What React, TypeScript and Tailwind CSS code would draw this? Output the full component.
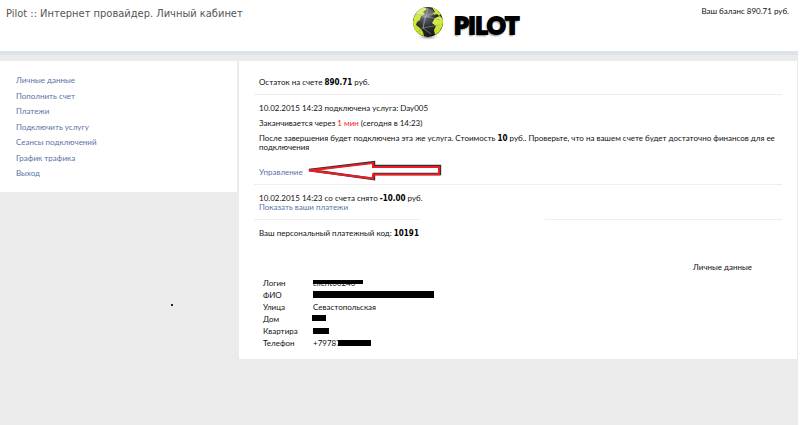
import React from "react";

const menu = [
  "Личные данные",
  "Пополнить счет",
  "Платежи",
  "Подключить услугу",
  "Сеансы подключений",
  "График трафика",
  "Выход",
];

const Bold = ({ children }: { children: React.ReactNode }) => (
  <b className="font-['DejaVu_Sans_Condensed','DejaVu_Sans',sans-serif] leading-[6px] text-black">{children}</b>
);

const Globe = () => (
  <svg width="34" height="36" viewBox="0 0 34 36" aria-hidden="true">
    <defs>
      <radialGradient id="sea" cx="0.4" cy="0.3" r="0.75">
        <stop offset="0" stopColor="#6b7075" />
        <stop offset="0.5" stopColor="#2b2e30" />
        <stop offset="1" stopColor="#101213" />
      </radialGradient>
      <linearGradient id="land" x1="0" y1="0" x2="0.3" y2="1">
        <stop offset="0" stopColor="#e0f05a" />
        <stop offset="1" stopColor="#bfe018" />
      </linearGradient>
      <radialGradient id="shade">
        <stop offset="0" stopColor="#777" />
        <stop offset="1" stopColor="#fff" stopOpacity="0" />
      </radialGradient>
      <clipPath id="disc">
        <circle cx="15" cy="17" r="15" />
      </clipPath>
    </defs>
    <ellipse cx="15" cy="32" rx="13" ry="3.5" fill="url(#shade)" />
    <circle cx="15" cy="17" r="15" fill="url(#sea)" />
    <g clipPath="url(#disc)">
      <g fill="url(#land)">
        <path d="M1 12L5 5L11 2L14 4L10 7L12 9L8 11L7 15L4 17L3 20L7 23L10 27L11 31L5 29L-1 22Z" />
        <path d="M19 2L24 4L28 9L26 11L24 9L21 10L20 8L22 7Z" />
        <path d="M22 13L27 11L31 15L29 22L26 27L22 30L21 25L23 21L19 18Z" />
      </g>
      <path
        d="M2 9L12 11L22 8M12 11L10 23L18 29M10 23L26 20M12 11L27 15M5 27L10 23L15 3"
        fill="none"
        stroke="#9ba1a0"
        strokeWidth="0.6"
      />
      <ellipse cx="12" cy="8" rx="9" ry="5" fill="#fff" opacity="0.22" />
    </g>
  </svg>
);

const Arrow = () => (
  <svg
    className="absolute left-[47px] -top-[8px]"
    width="136"
    height="22"
    viewBox="0 0 136 22"
    aria-hidden="true"
  >
    <path d="M3 10L68 2V6H134V14H68V19Z" fill="none" stroke="#333" strokeWidth="2.4" />
    <path d="M3 10.500L67 3V7H133V14.500H67V18.500Z" fill="none" stroke="#ed1c24" strokeWidth="2" />
  </svg>
);

const rows = [
  { label: "Логин", value: "client00240", bar: "left-0 top-px w-[50px] h-[4px]" },
  { label: "ФИО", value: "", bar: "left-0 top-0 w-[121px] h-[7px]" },
  { label: "Улица", value: "Севастопольская", bar: "" },
  { label: "Дом", value: "", bar: "-left-px top-0 w-[14px] h-[6px]" },
  { label: "Квартира", value: "", bar: "left-0 top-px w-[16px] h-[6px]" },
  { label: "Телефон", value: "+79787", bar: "left-[25px] top-px w-[33px] h-[6px]" },
];

const App = () => {
  return (
    <div className="min-h-screen bg-white pr-[2px] font-[Lato,sans-serif] text-[8px] leading-[9px] text-[#111]">
      <div className="min-h-screen bg-[#ebebeb]">

        <header className="flex h-[55px] border-b-4 border-[#dce2ec] bg-white pl-[6px] pr-[9px]">
          <h1 className="w-[52%] pt-[6px] font-['DejaVu_Sans_Condensed','DejaVu_Sans',sans-serif] text-[11px] leading-[16px] text-[#555]">
            Pilot :: Интернет провайдер. Личный кабинет
          </h1>
          <div className="flex gap-[7px] pt-[5px]">
            <Globe />
            <span className="pt-[6px] text-[23px] leading-[28px] font-black text-black [-webkit-text-stroke:2px_black] [text-shadow:-1px_2px_2px_#888]">
              PILOT
            </span>
          </div>
          <p className="flex-1 pt-[7px] text-right">Ваш баланс 890.71 руб.</p>
        </header>

        <div className="flex items-start gap-[2px] pt-[6px] pr-px">

          <nav className="w-[237px] shrink-0 bg-white px-[16px] pt-[15px] pb-[14px]">
            <ul className="flex h-[102px] flex-col justify-between">
              {menu.map((item) => (
                <li key={item}>
                  <a href="#" className="block text-[#5a73a8]">{item}</a>
                </li>
              ))}
            </ul>
          </nav>

          <main className="flex-1 bg-white pr-[15px] pb-[10px] pl-[15px]">
            <p className="border-b border-[#eee] px-[5px] pt-[17px] pb-[7px]">
              Остаток на счете <Bold>890.71</Bold> руб.
            </p>

            <section className="flex flex-col gap-[6px] border-b border-[#eee] px-[5px] pt-[9px] pb-[7px]">
              <p>10.02.2015 14:23 подключена услуга: Day005</p>
              <p>
                Заканчивается через <span className="text-[#f0142d]">1 мин</span> (сегодня в 14:23)
              </p>
              <p>
                После завершения будет подключена эта же услуга. Стоимость <Bold>10</Bold> руб.. Проверьте, что на вашем счете будет достаточно финансов для ее подключения
              </p>
              <div className="relative mt-[10px]">
                <a href="#" className="block text-[#5a73a8]">Управление</a>
                <Arrow />
              </div>
            </section>

            <section className="px-[5px] pt-[9px] pb-[7px]">
              <p>
                10.02.2015 14:23 со счета снято <Bold>-10.00</Bold> руб.
              </p>
              <a href="#" className="block text-[#5a73a8]">Показать ваши платежи</a>
            </section>
            <div className="flex justify-between">
              <div className="w-[166px] border-b border-[#eee]" />
              <div className="w-[237px] border-b border-[#eee]" />
            </div>

            <p className="px-[5px] pt-[9px]">
              Ваш персональный платежный код: <Bold>10191</Bold>
            </p>

            <h2 className="pt-[25px] pr-[30px] text-right">Личные данные</h2>

            <table className="mt-[5px] ml-[9px]">
              <tbody>
                {rows.map((row) => (
                  <tr key={row.label} className="h-[12px]">
                    <th scope="row" className="w-[50px] p-0 text-left font-normal">{row.label}</th>
                    <td className="p-0">
                      <div className="relative">
                        {row.value || "\u00a0"}
                        {row.bar && <span className={"absolute bg-black " + row.bar} />}
                      </div>
                    </td>
                  </tr>
                ))}
              </tbody>
            </table>
          </main>

        </div>

        <div className="pointer-events-none absolute top-[304px] left-[171px] size-[2px] bg-[#222]" />

      </div>
    </div>
  );
};

export default App;
